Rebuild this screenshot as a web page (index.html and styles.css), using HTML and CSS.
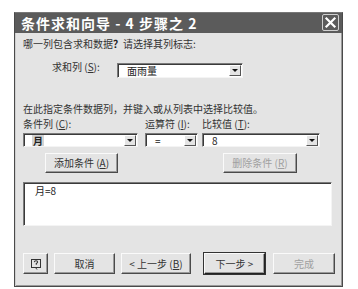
FILE: index.html
```html
<!DOCTYPE html>
<html lang="zh">
<head>
<meta charset="utf-8">
<link rel="stylesheet" href="styles.css">
</head>
<body>
<div class="dialog">
  <div class="titlebar">
    <span class="title">条件求和向导 - 4 步骤之 2</span>
    <span class="close">
      <svg width="13" height="13" viewBox="0 0 13 13"><path d="M2.5 2.5 L10.5 10.5 M10.5 2.5 L2.5 10.5" stroke="#fff" stroke-width="2.2" stroke-linecap="square"/></svg>
    </span>
  </div>
  <div class="content">
    <div class="row1">哪一列包含求和数据<b>？</b>请选择其列标志:</div>
    <div class="row2">
      <span class="lbl2">求和列 (<u>S</u>):</span>
      <div class="combo combo-sum"><span class="val">面雨量</span><span class="arrow"></span></div>
    </div>
    <div class="row3">在此指定条件数据列，并键入或从列表中选择比较值。</div>
    <div class="grid">
      <span>条件列 (<u>C</u>):</span>
      <span>运算符 (<u>I</u>):</span>
      <span>比较值 (<u>T</u>):</span>
      <div class="combo"><span class="val sel">月</span><span class="arrow"></span></div>
      <div class="combo"><span class="val">=</span><span class="arrow"></span></div>
      <div class="combo"><span class="val">8</span><span class="arrow"></span></div>
    </div>
    <div class="row6">
      <button class="btn btn-add">添加条件 (<u>A</u>)</button>
      <button class="btn btn-del disabled">删除条件 (<u>R</u>)</button>
    </div>
    <div class="listbox">月=8</div>
    <div class="footer">
      <button class="btn btn-help">
        <svg width="12" height="12" viewBox="0 0 12 12"><rect x="1.5" y="1.5" width="9" height="8" fill="none" stroke="#333" stroke-width="1"/><path d="M4.3 4.2 Q4.5 2.8 6 2.8 Q7.6 2.8 7.6 4.1 Q7.6 5 6.3 5.5 L6.3 6.8" fill="none" stroke="#333" stroke-width="1.1"/><path d="M5.5 9.5 L7 11.5" stroke="#333" stroke-width="1"/></svg>
      </button>
      <button class="btn btn-cancel">取消</button>
      <button class="btn btn-prev">&lt; 上一步 (<u>B</u>)</button>
      <button class="btn btn-next">下一步 &gt;</button>
      <button class="btn btn-finish disabled">完成</button>
    </div>
  </div>
</div>
</body>
</html>
```
FILE: styles.css
```css
* { box-sizing: border-box; }
html, body { margin: 0; padding: 0; background: #fff; }
body {
  font-family: "Noto Sans CJK SC", "Liberation Sans", sans-serif;
  font-size: 10px;
  color: #333;
}
u { text-decoration: underline; text-underline-offset: 1px; }
b { font-weight: bold; color: #222; }

.dialog {
  width: 329px;
  height: 275px;
  margin: 12px 0 0 14px;
  border: 1px solid #4a4a4a;
  border-top-color: #777;
  background: #e4e4e4;
  display: flex;
  flex-direction: column;
  box-shadow: inset 1px 0 0 #cfcfcf, inset -1px 0 0 #9a9a9a, inset 0 -1px 0 #9a9a9a;
}

.titlebar {
  height: 20px;
  background: #5b5b5b;
  display: flex;
  align-items: center;
  justify-content: space-between;
  padding: 0 3px 0 6px;
  flex: none;
}
.title {
  color: #fff;
  font-weight: bold;
  font-size: 14px;
  letter-spacing: 1px;
  line-height: 20px;
}
.close {
  width: 17px;
  height: 17px;
  border: 1px solid #d0d0d0;
  border-radius: 2px;
  display: flex;
  align-items: center;
  justify-content: center;
  margin-top: -1px;
}

.content {
  padding-left: 8px;
  display: flex;
  flex-direction: column;
}
.row1 { margin-top: 4px; line-height: 14px; }
.row2 {
  margin-top: 12px;
  display: flex;
  align-items: flex-start;
  padding-left: 29px;
  height: 15px;
}
.lbl2 { width: 65px; line-height: 12px; margin-top: -2px; }
.row3 { margin-top: 24px; line-height: 14px; }

.combo {
  height: 15px;
  background: #fff;
  border: 1px solid;
  border-color: #7a7a7a #f4f4f4 #f4f4f4 #7a7a7a;
  box-shadow: inset 1px 1px 0 #3a3a3a;
  display: flex;
  align-items: center;
  justify-content: space-between;
  padding: 1px 1px 1px 5px;
}
.combo-sum { width: 126px; }
.combo .val { line-height: 11px; font-size: 10px; color: #222; padding-left: 4px; }
.combo .val.sel { font-weight: bold; color: #222; background: #d4d4d4; padding: 0 1px; margin-left: 3px; }
.arrow {
  width: 12px;
  height: 11px;
  background: #e4e4e4;
  border: 1px solid;
  border-color: #fff #555 #555 #fff;
  position: relative;
  flex: none;
}
.arrow::after {
  content: "";
  position: absolute;
  left: 2px;
  top: 3px;
  border-left: 3px solid transparent;
  border-right: 3px solid transparent;
  border-top: 3px solid #111;
}

.grid {
  margin-top: 1px;
  display: grid;
  grid-template-columns: 115px 53px 115px;
  column-gap: 7px;
  row-gap: 2px;
  grid-template-rows: 14px 14px;
  line-height: 14px;
}
.grid > span:nth-child(3) { margin-left: -3px; }
.grid .combo { height: 14px; }
.grid .combo:nth-child(6) { margin-left: -3px; }

.row6 {
  margin-top: 6px;
  display: flex;
  height: 20px;
}
.btn {
  font-family: inherit;
  font-size: 10px;
  color: #333;
  background: #e4e4e4;
  border: 1px solid;
  border-color: #fafafa #4a4a4a #4a4a4a #fafafa;
  box-shadow: inset -1px -1px 0 #9a9a9a;
  padding: 0;
  height: 20px;
  display: flex;
  align-items: center;
  justify-content: center;
  line-height: 12px;
}
.btn.disabled { color: #a0a0a0; }
.btn-add { width: 73px; margin-left: 22px; }
.btn-del { width: 74px; margin-left: 105px; }

.listbox {
  margin-top: 9px;
  width: 309px;
  height: 44px;
  background: #fff;
  border: 1px solid;
  border-color: #7a7a7a #f4f4f4 #f4f4f4 #7a7a7a;
  box-shadow: inset 1px 1px 0 #3a3a3a;
  padding: 2px 0 0 11px;
  line-height: 12px;
  color: #222;
}

.footer {
  margin-top: 27px;
  display: flex;
  height: 21px;
}
.footer .btn { height: 21px; }
.btn-help { width: 25px; }
.btn-cancel { width: 61px; margin-left: 6px; }
.btn-prev { width: 70px; margin-left: 6px; }
.btn-next {
  width: 61px;
  margin-left: 13px;
  border-color: #fafafa #222 #222 #fafafa;
  outline: 1px solid #333;
  outline-offset: 0;
}
.btn-finish { width: 62px; margin-left: 8px; }
```
